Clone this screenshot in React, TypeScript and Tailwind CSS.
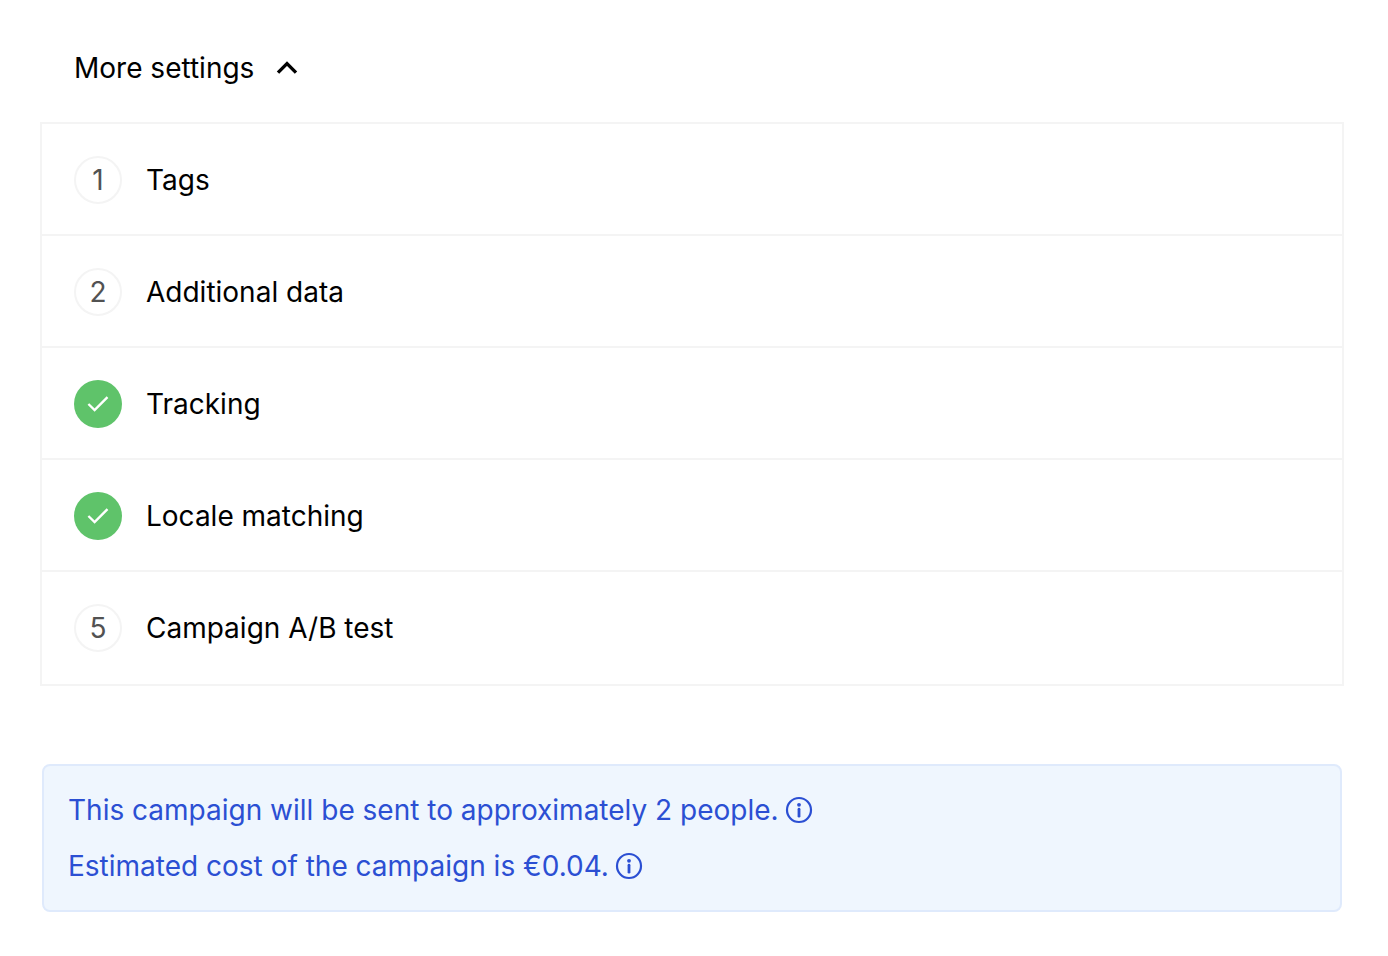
interface IStep {
  title: string;
  done: boolean;
}

const steps: IStep[] = [
  { title: "Tags", done: false },
  { title: "Additional data", done: false },
  { title: "Tracking", done: true },
  { title: "Locale matching", done: true },
  { title: "Campaign A/B test", done: false },
];

const notices = [
  "This campaign will be sent to approximately 2 people.",
  "Estimated cost of the campaign is €0.04.",
];

const ChevronUp = () => (
  <svg
    width={24}
    height={24}
    viewBox="0 0 24 24"
    fill="none"
    stroke="currentColor"
    strokeWidth={3.4}
    aria-hidden="true"
  >
    <path d="M4 16.6L13 7.6L22 16.6" />
  </svg>
);

const Check = () => (
  <svg
    width={24}
    height={24}
    viewBox="0 0 24 24"
    fill="none"
    stroke="currentColor"
    strokeWidth={2.4}
    aria-hidden="true"
  >
    <path d="M2.4 12L8.6 18L21.5 5.2" />
  </svg>
);

const Info = () => (
  <svg
    width={28}
    height={28}
    viewBox="0 0 28 28"
    fill="none"
    stroke="currentColor"
    strokeWidth={2.2}
    aria-hidden="true"
  >
    <circle cx="14" cy="14" r="12" />
    <circle
      cx="14"
      cy="8.8"
      r="1.9"
      fill="currentColor"
      stroke="none"
    />
    <path
      d="M14 13.2V20.2"
      strokeWidth={2.8}
      strokeLinecap="round"
    />
  </svg>
);

const StepBadge: React.FC<{
  number: number;
  done: boolean;
}> = ({ number, done }) => {
  if (done) {
    return (
      <span className="flex size-12 items-center justify-center rounded-full bg-[#5fc36a] text-white">
        <Check />
      </span>
    );
  }

  return (
    <span className="flex size-12 items-center justify-center rounded-full border-2 border-[#f4f4f4] text-[#525252]">
      {number}
    </span>
  );
};

const App: React.FC = () => {
  return (
    <main className="bg-white pt-12 pr-11 pb-11 pl-10 font-['Inter',sans-serif] text-[28px] leading-10 text-black">
      <button
        type="button"
        aria-expanded="true"
        className="ml-[34px] flex cursor-pointer items-center gap-5"
      >
        More settings
        <ChevronUp />
      </button>
      <ol className="mt-[34px] border-2 border-[#f4f4f4]">
        {steps.map((step, index) => (
          <li
            key={step.title}
            className="h-28 border-b-2 border-[#f4f4f4] last:border-b-0"
          >
            <button
              type="button"
              className="flex w-full cursor-pointer items-center gap-6 px-8 pt-8 text-left"
            >
              <StepBadge number={index + 1} done={step.done} />
              {step.title}
            </button>
          </li>
        ))}
      </ol>
      <section className="mx-0.5 mt-[78px] flex flex-col gap-4 rounded-lg border-2 border-[#dfeafc] bg-[#eff6fe] p-6 text-[#2b4fd3]">
        {notices.map((notice) => (
          <div key={notice} className="flex items-center gap-1.5">
            <p>{notice}</p>
            <Info />
          </div>
        ))}
      </section>
    </main>
  );
};

export default App;
